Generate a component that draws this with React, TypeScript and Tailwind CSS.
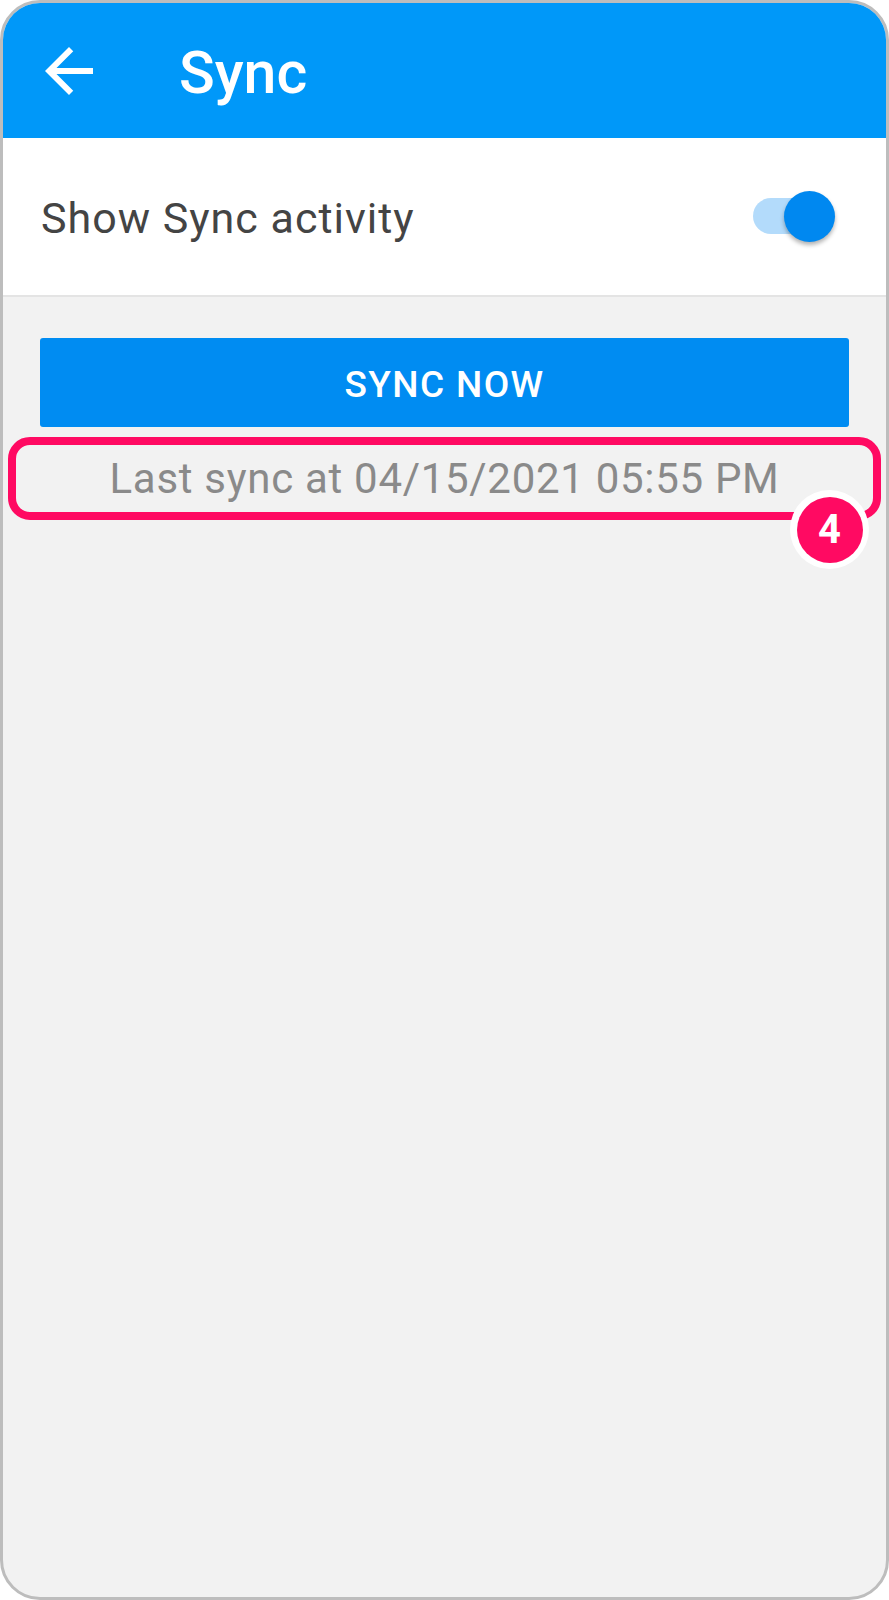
import React from "react";

const font = { fontFamily: "Roboto, 'Noto Sans', sans-serif" };

const BackArrow = () => (
  <svg width="72" height="72" viewBox="0 0 24 24" fill="#ffffff">
    <path d="M20 11H7.83l5.59-5.59L12 4l-8 8 8 8 1.41-1.41L7.83 13H20v-2z" />
  </svg>
);

const Toggle = () => (
  <div className="relative w-[84px] h-[52px]">
    <div className="absolute left-0 top-[7px] w-[75px] h-[36px] rounded-full bg-[#b3dbfb]" />
    <div className="absolute left-[31px] top-0 w-[51px] h-[51px] rounded-full bg-[#0088f0] shadow-[0_3px_4px_rgba(0,0,0,0.3)]" />
  </div>
);

export default function App() {
  return (
    <div
      className="w-[889px] h-[1600px] border-[3px] border-[#bdbdbd] rounded-[40px] overflow-hidden bg-[#f2f2f2] flex flex-col"
      style={font}
    >
      {/* Toolbar */}
      <div className="h-[135px] bg-[#0098f9] flex items-center pl-[30px] shrink-0">
        <BackArrow />
        <span className="ml-[74px] text-[59px] leading-none font-medium text-white pt-[4px]">
          Sync
        </span>
      </div>

      {/* Show sync activity */}
      <div className="h-[159px] bg-white border-b-[2px] border-[#e4e4e4] flex items-center justify-between pl-[38px] pr-[49px] shrink-0">
        <span className="text-[43px] tracking-[1px] text-[#444444] pt-[4px]">Show Sync activity</span>
        <Toggle />
      </div>

      <div className="px-[37px] pt-[41px]">
        <button className="w-full h-[89px] bg-[#008cf2] rounded-[3px] text-white text-[37px] font-medium tracking-[1.4px] pt-[4px]">
          SYNC NOW
        </button>
      </div>

      {/* Last sync (highlighted) */}
      <div className="relative mx-[5px] mt-[10px] h-[83px] border-[8px] border-[#ff0a62] rounded-[22px] flex items-center justify-center">
        <span className="text-[42px] leading-[67px] tracking-[0.7px] text-[#8a8a8a]">
          Last sync at 04/15/2021 05:55 PM
        </span>
        <div className="absolute right-[4px] top-[45px] w-[79px] h-[79px] rounded-full bg-white flex items-center justify-center">
          <div className="w-[66px] h-[66px] rounded-full bg-[#ff0a62] flex items-center justify-center text-white text-[40px] font-bold leading-none">
            4
          </div>
        </div>
      </div>
    </div>
  );
}
